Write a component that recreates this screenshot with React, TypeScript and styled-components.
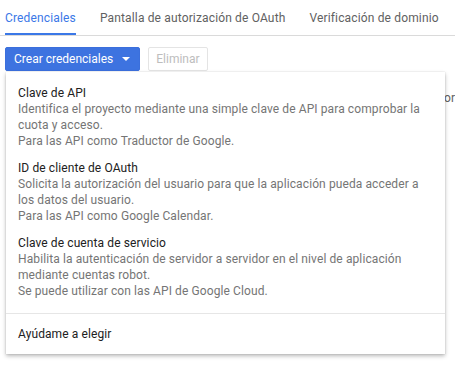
import React from 'react';
import styled, { createGlobalStyle } from 'styled-components';

const GlobalStyle = createGlobalStyle`
	html, body {
		margin: 0;
		padding: 0;
		background: #fff;
		font-family: Roboto, 'Noto Sans', Arial, sans-serif;
		-webkit-font-smoothing: antialiased;
	}
`;

const Page = styled.div`
	position: relative;
	width: 455px;
	height: 373px;
	overflow: hidden;
`;

const TabBar = styled.div`
	display: flex;
	gap: 24px;
	padding-left: 5px;
	height: 35px;
	border-bottom: 1px solid #dadada;
`;

const Tab = styled.div<{ $active?: boolean }>`
	display: flex;
	align-items: center;
	height: 100%;
	box-sizing: border-box;
	padding-top: 2px;
	font-size: 12px;
	letter-spacing: 0.15px;
	color: ${(p) => (p.$active ? '#3b78e7' : '#616161')};
	border-bottom: 2px solid ${(p) => (p.$active ? '#3b78e7' : 'transparent')};
	white-space: nowrap;
`;

const Toolbar = styled.div`
	display: flex;
	gap: 8px;
	padding: 11px 0 0 5px;
`;

const Button = styled.button<{ $primary?: boolean }>`
	display: flex;
	align-items: center;
	gap: 9px;
	height: 24px;
	padding: ${(p) => (p.$primary ? '0 9px 0 8px' : '0 7px')};
	font-family: inherit;
	font-size: 12px;
	letter-spacing: 0;
	border-radius: 2px;
	border: 1px solid ${(p) => (p.$primary ? '#3b6fdc' : '#e4e4e4')};
	background: ${(p) => (p.$primary ? '#3d73e0' : '#fff')};
	color: ${(p) => (p.$primary ? '#fff' : '#bdbdbd')};
`;

const Caret = styled.span`
	width: 0;
	height: 0;
	border-left: 4px solid transparent;
	border-right: 4px solid transparent;
	border-top: 4px solid #fff;
`;

const BehindText = styled.div`
	padding-top: 20px;
	text-align: right;
	font-size: 12px;
	color: #616161;
	white-space: nowrap;
`;

const Menu = styled.div`
	position: absolute;
	top: 72px;
	left: 6px;
	width: 439px;
	background: #fff;
	box-shadow: 0 2px 4px rgba(0, 0, 0, 0.28), 0 0 1px rgba(0, 0, 0, 0.2);
`;

const Section = styled.div`
	padding: 8px 0;
	border-bottom: 1px solid #e6e6e6;
`;

const Item = styled.div`
	padding: 5px 12px 6px 12px;
	font-size: 12px;
	line-height: 16px;
	letter-spacing: 0.1px;
`;

const Title = styled.div`
	color: #212121;
`;

const Line = styled.div`
	color: #757575;
	white-space: nowrap;
`;

const HelpItem = styled.div`
	display: flex;
	align-items: center;
	height: 40px;
	padding: 0 12px;
	font-size: 12px;
	letter-spacing: 0.1px;
	color: #212121;
`;

const options = [
	{
		title: 'Clave de API',
		lines: [
			'Identifica el proyecto mediante una simple clave de API para comprobar la',
			'cuota y acceso.',
			'Para las API como Traductor de Google.',
		],
	},
	{
		title: 'ID de cliente de OAuth',
		lines: [
			'Solicita la autorización del usuario para que la aplicación pueda acceder a',
			'los datos del usuario.',
			'Para las API como Google Calendar.',
		],
	},
	{
		title: 'Clave de cuenta de servicio',
		lines: [
			'Habilita la autenticación de servidor a servidor en el nivel de aplicación',
			'mediante cuentas robot.',
			'Se puede utilizar con las API de Google Cloud.',
		],
	},
];

export default function App() {
	return (
		<Page>
			<GlobalStyle />
			<TabBar>
				<Tab $active>Credenciales</Tab>
				<Tab>Pantalla de autorización de OAuth</Tab>
				<Tab>Verificación de dominio</Tab>
			</TabBar>
			<Toolbar>
				<Button $primary>
					Crear credenciales
					<Caret />
				</Button>
				<Button disabled>Eliminar</Button>
			</Toolbar>
			<BehindText>Consulta la documentación de la API para más información sobre el autor</BehindText>
			<Menu>
				<Section>
					{options.map((o) => (
						<Item key={o.title}>
							<Title>{o.title}</Title>
							{o.lines.map((l) => (
								<Line key={l}>{l}</Line>
							))}
						</Item>
					))}
				</Section>
				<HelpItem>Ayúdame a elegir</HelpItem>
			</Menu>
		</Page>
	);
}
